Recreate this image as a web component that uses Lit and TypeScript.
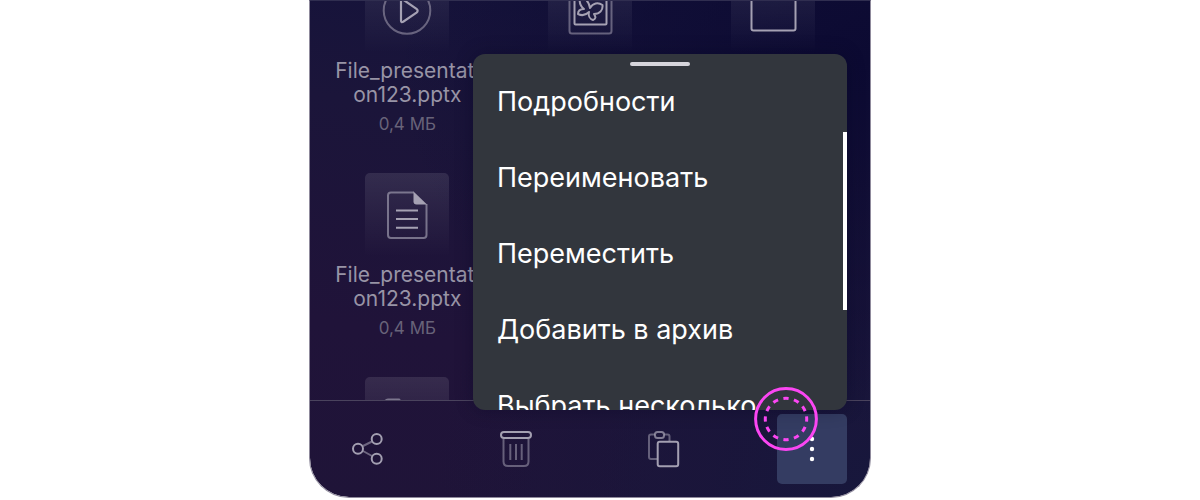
import { LitElement, html, css, svg, nothing } from "lit";
import { customElement } from "lit/decorators.js";

const icons = {
  video: svg`
    <circle cx="42" cy="41.5" r="23.3" stroke-opacity=".55" />
    <path stroke-width="2.2" d="M36 32V51.5Q36 53.800 38.200 52.700L51.500 43.600Q53.800 41.700 51.500 39.800L38.200 30.700Q36 29.500 36 32Z" />`,
  image: svg`
    <rect x="21.500" y="17" width="42" height="47.500" rx="2.500" stroke-opacity=".55" />
    <rect x="26.500" y="22" width="32" height="33.500" rx="1" />
    <path stroke-linejoin="round" d="M42 39C45 34 50 33 54.500 36C55 41 52 45 46 45C48 48 48 50 45 51C42 50 40 47 41 43C38 46 34 47 30 45C30 42 32 40 36 40C32 37 31 33 32 28C36 28 41 32 42 39Z" />`,
  frame: svg`<rect x="20.500" y="16" width="44" height="45.500" rx="2" />`,
  document: svg`
    <path stroke-opacity=".65" d="M49 19.500H26Q23 19.500 23 22.500V62Q23 65 26 65H58.500Q61.500 65 61.500 62V31" />
    <path fill="currentColor" stroke="none" d="M48.500 18.500L62 31.500H51.500Q48.500 31.500 48.500 28.500Z" />
    <path d="M31 37.500H53M31 46H53M31 54.700H53" />`,
  folder: svg`<path stroke-opacity=".65" d="M20.500 60V25Q20.500 22.500 23 22.500H34L39 28H62V60Z" />`,
  share: svg`
    <path stroke-opacity=".6" d="M30 32L39 27.500M30 37L39 42" />
    <circle cx="25" cy="34.700" r="5" /><circle cx="43.700" cy="25" r="5" /><circle cx="43.700" cy="44.700" r="5" />`,
  trash: svg`
    <path stroke-opacity=".55" d="M22.500 25V47.500Q22.500 52 27 52H43Q47.500 52 47.500 47.500V25M29.300 30V46M35 30V46M40.700 30V46" />
    <rect x="20" y="18" width="30" height="6" rx="3" />`,
  copy: svg`
    <path stroke-opacity=".55" d="M28 45H22Q20 45 20 43V22.500Q20 20.500 22 20.500H26M35 20.500H38.500Q40.500 20.500 40.500 22.500V27" />
    <rect x="26" y="18" width="9" height="6" rx="2.500" stroke-opacity=".75" />
    <rect x="28.700" y="27.700" width="20.500" height="24.500" rx="2" />`,
  more: svg`<g fill="#fff" stroke="none"><circle cx="35" cy="25" r="2.200" /><circle cx="35" cy="35" r="2.200" /><circle cx="35" cy="45" r="2.200" /></g>`,
};

type IconName = keyof typeof icons;

const files: { icon: IconName; name?: string; size?: string }[] = [
  { icon: "video", name: "File_presentation123.pptx", size: "0,4 МБ" },
  { icon: "image" },
  { icon: "frame" },
  { icon: "document", name: "File_presentation123.pptx", size: "0,4 МБ" },
  { icon: "folder" },
  { icon: "folder" },
  { icon: "folder" },
];

const tools: { icon: IconName; label: string }[] = [
  { icon: "share", label: "Поделиться" },
  { icon: "trash", label: "Удалить" },
  { icon: "copy", label: "Копировать" },
  { icon: "more", label: "Ещё" },
];

const actions = ["Подробности", "Переименовать", "Переместить", "Добавить в архив", "Выбрать несколько"];

@customElement("app-root")
export class AppRoot extends LitElement {
  static styles = css`
    :host {
      display: block;
      background: #fff;
      font-family: Inter, "Liberation Sans", sans-serif;
    }
    * {
      box-sizing: border-box;
    }
    .page {
      display: flex;
      justify-content: center;
      align-items: flex-start;
      min-height: 100vh;
      padding-right: 20px;
    }
    .panel {
      position: relative;
      width: 100%;
      max-width: 562px;
      border: 1px solid #8f8a9c;
      border-top-color: #302e50;
      border-radius: 0 0 40px 40px;
      background:
        radial-gradient(ellipse at 100% 12%, #0c0a32 0%, rgba(12, 10, 50, 0) 60%),
        radial-gradient(ellipse at 100% 100%, #17173c 0%, rgba(23, 23, 60, 0) 55%),
        linear-gradient(190deg, #13123b 0%, #1b153a 32%, #201339 70%, #1f1438 100%);
      background-clip: padding-box;
      overflow: hidden;
    }
    .viewport {
      height: 399px;
      overflow: hidden;
    }
    .files {
      display: grid;
      grid-template-columns: repeat(3, 1fr);
      grid-auto-rows: 204px;
      margin: -32px 0 0;
      padding: 0 6px;
      list-style: none;
    }
    .file {
      display: flex;
      flex-direction: column;
      align-items: center;
      text-align: center;
    }
    .tile {
      width: 84px;
      height: 84px;
      border-radius: 5px;
      color: #a5a1b3;
      background: linear-gradient(rgba(255, 255, 255, 0.1), rgba(255, 255, 255, 0));
    }
    .icon {
      display: block;
      width: 100%;
      height: 100%;
    }
    .name {
      width: 150px;
      margin-top: 6px;
      font-size: 21px;
      line-height: 24px;
      word-break: break-all;
      color: #9894a6;
    }
    .size {
      margin-top: 5px;
      font-size: 17px;
      line-height: 24px;
      color: #686379;
    }
    .toolbar {
      display: flex;
      justify-content: space-between;
      padding: 13px 23px;
      border-top: 1px solid #4a435d;
    }
    .tool {
      width: 70px;
      height: 70px;
      padding: 0;
      border: 0;
      border-radius: 5px;
      background: none;
      color: #a39fb1;
    }
    .tool.active {
      background: #343c62;
    }
    .menu {
      position: absolute;
      right: 23px;
      bottom: 87px;
      width: 374px;
      height: 356px;
      border-radius: 12px;
      background: #32363d;
      box-shadow: 0 0 18px rgba(5, 5, 30, 0.3);
      overflow: hidden;
    }
    .handle {
      width: 60px;
      height: 4px;
      margin: 8px auto 0;
      border-radius: 2px;
      background: #d6d5dc;
    }
    .actions {
      margin-top: -2px;
    }
    .action {
      display: block;
      width: 100%;
      height: 76px;
      padding: 0 24px;
      border: 0;
      background: none;
      color: #fff;
      font: 27px/36px Inter, "Liberation Sans", sans-serif;
      text-align: left;
    }
    .thumb {
      position: absolute;
      right: 0;
      top: 78px;
      width: 4px;
      height: 178px;
      background: #fff;
    }
    .touch {
      position: absolute;
      right: 52px;
      bottom: 46px;
      width: 64px;
      height: 64px;
      pointer-events: none;
    }
  `;

  private icon(name: IconName, box: number) {
    return html`<svg class="icon" viewBox="0 0 ${box} ${box}" fill="none" stroke="currentColor" stroke-width="2" aria-hidden="true">${icons[name]}</svg>`;
  }

  render() {
    return html`
      <main class="page">
        <section class="panel">
          <div class="viewport">
            <ul class="files">
              ${files.map(
                (f) => html`<li class="file">
                  <div class="tile">${this.icon(f.icon, 84)}</div>
                  ${f.name ? html`<div class="name">${f.name}</div><div class="size">${f.size}</div>` : nothing}
                </li>`
              )}
            </ul>
          </div>
          <nav class="toolbar">
            ${tools.map(
              (t) => html`<button class="tool ${t.icon === "more" ? "active" : ""}" aria-label=${t.label}>${this.icon(t.icon, 70)}</button>`
            )}
          </nav>
          <div class="menu">
            <div class="handle"></div>
            <div class="actions">
              ${actions.map((a) => html`<button class="action">${a}</button>`)}
            </div>
            <div class="thumb"></div>
          </div>
          <svg class="touch" viewBox="0 0 64 64" fill="none" stroke="#fb46f3" stroke-width="3" aria-hidden="true">
            <circle cx="32" cy="32" r="30.400" />
            <circle cx="32" cy="32" r="20.700" pathLength="120" stroke-dasharray="5 5" stroke-dashoffset="2.500" />
          </svg>
        </section>
      </main>
    `;
  }
}
